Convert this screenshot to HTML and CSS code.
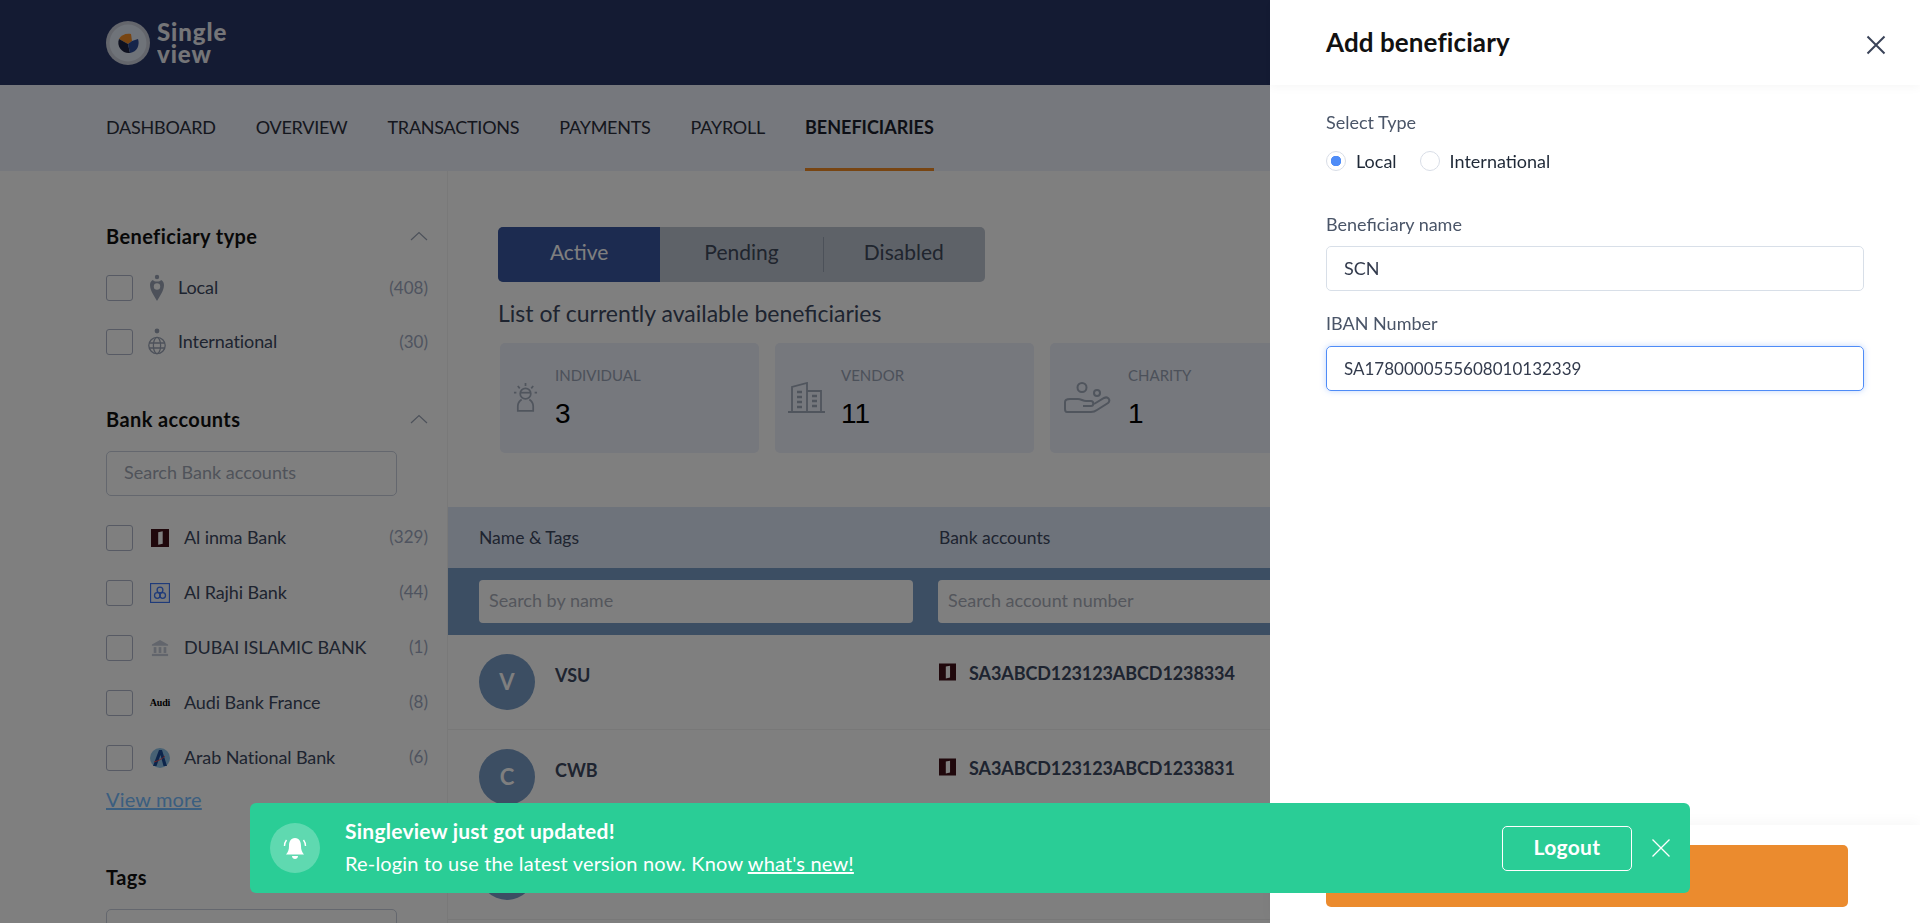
FILE: index.html
```html
<!DOCTYPE html>
<html lang="en">
	<head>
		<meta charset="UTF-8" />
		<meta name="viewport" content="width=device-width, initial-scale=1.0" />
		<title>Singleview - Beneficiaries</title>
		<link rel="stylesheet" href="styles.css">
	</head>
	<body>
		<header class="topbar">
			<div class="logo">
				<svg class="logo-mark" viewBox="0 0 44 44">
					<circle cx="22" cy="22" r="22" fill="#ffffff" opacity="0.75" />
					<circle cx="22" cy="22" r="18.5" fill="#dfe6f2" />
					<path d="M13 18 C15 14 20 12 25 13 L26 20 L22 23 Z" fill="#f08a24" />
					<path d="M13 18 L22 23 L24 32 C17 33 10 26 13 18 Z" fill="#1c2340" />
					<path d="M26 20 L32 18 C34 24 31 31 24 32 L22 23 Z" fill="#2c4a94" />
				</svg>
				<div class="logo-text">
					<div>Single</div>
					<div>view</div>
				</div>
			</div>
		</header>

		<nav class="mainnav">
			<a>DASHBOARD</a>
			<a>OVERVIEW</a>
			<a>TRANSACTIONS</a>
			<a>PAYMENTS</a>
			<a>PAYROLL</a>
			<a class="active">BENEFICIARIES</a>
		</nav>

		<div class="content">
			<aside class="sidebar">
				<div class="filter-title first">
					<span>Beneficiary type</span>
					<svg class="chevron" viewBox="0 0 18 10"><path d="M1 9 L9 1.5 L17 9" /></svg>
				</div>
				<div class="type-row">
					<span class="checkbox"></span>
					<svg class="type-icon" viewBox="0 0 18 28">
						<circle cx="9" cy="3" r="2.2" fill="#9aa3b5" />
						<path d="M2 11 C2 7 5 6 5 6 C6 8 12 8 13 6 C13 6 16 7 16 11 C16 17 11 23 9 27 C7 23 2 17 2 11 Z" fill="#9aa3b5" />
						<circle cx="9" cy="12.5" r="3.2" fill="#ffffff" />
					</svg>
					<span class="row-label">Local</span>
					<span class="row-count">(408)</span>
				</div>
				<div class="type-row">
					<span class="checkbox"></span>
					<svg class="type-icon" viewBox="0 0 18 28" fill="none" stroke="#9aa3b5" stroke-width="1.3">
						<circle cx="9" cy="3" r="2.4" fill="#9aa3b5" stroke="none" />
						<circle cx="9" cy="17.5" r="8.2" />
						<ellipse cx="9" cy="17.5" rx="3.6" ry="8.2" />
						<path d="M1 15 H17 M1 20 H17" />
					</svg>
					<span class="row-label">International</span>
					<span class="row-count">(30)</span>
				</div>

				<div class="filter-title">
					<span>Bank accounts</span>
					<svg class="chevron" viewBox="0 0 18 10"><path d="M1 9 L9 1.5 L17 9" /></svg>
				</div>
				<div class="filter-search">Search Bank accounts</div>
				<div class="bank-list">
					<div class="bank-row">
						<span class="checkbox"></span>
						<span class="bank-icon">
							<svg viewBox="0 0 20 20" width="18" height="18">
								<rect width="20" height="20" fill="#401018" />
								<path d="M8 3.5 L13 2.5 V16.5 L8 17.5 Z" fill="#ffffff" />
							</svg>
						</span>
						<span class="row-label">Al inma Bank</span>
						<span class="row-count">(329)</span>
					</div>
					<div class="bank-row">
						<span class="checkbox"></span>
						<span class="bank-icon">
							<svg viewBox="0 0 20 20" width="20" height="20" fill="none" stroke="#3e76f4" stroke-width="1.3">
								<rect x="0.5" y="0.5" width="19" height="19" fill="#f4f6fb" />
								<circle cx="10" cy="7" r="2.900" />
								<circle cx="7.300" cy="12.500" r="2.800" />
								<circle cx="12.700" cy="12.500" r="2.800" />
								<path d="M10 10 V15" />
							</svg>
						</span>
						<span class="row-label">Al Rajhi Bank</span>
						<span class="row-count">(44)</span>
					</div>
					<div class="bank-row">
						<span class="checkbox"></span>
						<span class="bank-icon">
							<svg viewBox="0 0 20 20" width="18" height="18" fill="#c4cbd8">
								<path d="M10 1 L19 6 V7.5 H1 V6 Z" />
								<rect x="3" y="9" width="3" height="6.5" />
								<rect x="8.5" y="9" width="3" height="6.5" />
								<rect x="14" y="9" width="3" height="6.5" />
								<rect x="1" y="16.5" width="18" height="2.5" />
							</svg>
						</span>
						<span class="row-label">DUBAI ISLAMIC BANK</span>
						<span class="row-count">(1)</span>
					</div>
					<div class="bank-row">
						<span class="checkbox"></span>
						<span class="bank-icon audi">Audi</span>
						<span class="row-label">Audi Bank France</span>
						<span class="row-count">(8)</span>
					</div>
					<div class="bank-row">
						<span class="checkbox"></span>
						<span class="bank-icon">
							<svg viewBox="0 0 20 20" width="20" height="20">
								<circle cx="10" cy="10" r="10" fill="#8fc3e8" />
								<path d="M3 18 L9 2 H12 L17 18 H13.500 L10.500 7 L6.500 18 Z" fill="#1a4a96" />
								<path d="M4 14 C8 13 12 11 15 8" fill="none" stroke="#f04848" stroke-width="0.9" />
							</svg>
						</span>
						<span class="row-label">Arab National Bank</span>
						<span class="row-count">(6)</span>
					</div>
				</div>
				<a class="view-more">View more</a>

				<div class="filter-title tags-title">
					<span>Tags</span>
				</div>
				<div class="filter-search"></div>
			</aside>

			<main class="main">
				<div class="tabs">
					<div class="tab active">Active</div>
					<div class="tab">Pending</div>
					<div class="tab divided">Disabled</div>
				</div>
				<div class="list-title">List of currently available beneficiaries</div>

				<div class="cards">
					<div class="card">
						<svg class="card-icon person" viewBox="0 0 26 30" fill="none" stroke="#a0aabb" stroke-width="1.8">
							<path d="M13 0 V3 M5 3 L7 5.500 M21 3 L19 5.500 M1 10 H3.500 M25 10 H22.500" />
							<circle cx="13" cy="11" r="5.500" />
							<path d="M8 10 H18" />
							<path d="M9 17 C6 19 5 21 5 24 V29 H21 V24 C21 21 20 19 17 17" />
						</svg>
						<div class="card-body">
							<div class="card-label">INDIVIDUAL</div>
							<div class="card-value">3</div>
						</div>
					</div>
					<div class="card">
						<svg class="card-icon building" viewBox="0 0 37 31" fill="none" stroke="#a0aabb" stroke-width="1.8">
							<path d="M0 30 H37" />
							<path d="M4 30 V5 L19 1 V30" />
							<path d="M19 9 H33 V30" />
							<path d="M9 10 H14 M9 15 H14 M9 20 H14 M9 25 H14 M24 14 H29 M24 19 H29 M24 24 H29" stroke-width="2.400" />
						</svg>
						<div class="card-body">
							<div class="card-label">VENDOR</div>
							<div class="card-value">11</div>
						</div>
					</div>
					<div class="card">
						<svg class="card-icon charity" viewBox="0 0 47 31" fill="none" stroke="#a0aabb" stroke-width="2">
							<circle cx="18" cy="5.500" r="4.500" />
							<circle cx="33" cy="11" r="3" />
							<path d="M14 17 C17 17 19 19 22 19 H27 C30 19 30 24 27 24 H19" />
							<path d="M30 22 L40 16 C44 14 47 18 44 21 L33 28 C31 29.500 29 30 27 30 H3 C1.500 30 1 29 1 27 V20 C1 18 3 17 6 17 H14" />
						</svg>
						<div class="card-body">
							<div class="card-label">CHARITY</div>
							<div class="card-value">1</div>
						</div>
					</div>
				</div>

				<div class="table">
					<div class="table-head">
						<div class="col-name">Name &amp; Tags</div>
						<div class="col-bank">Bank accounts</div>
					</div>
					<div class="table-search">
						<div class="col-name"><div class="cell-search">Search by name</div></div>
						<div class="col-bank"><div class="cell-search">Search account number</div></div>
					</div>
					<div class="table-row">
						<div class="col-name">
							<span class="avatar">V</span>
							<span class="row-name">VSU</span>
						</div>
						<div class="col-bank account">
							<svg viewBox="0 0 20 20" width="17" height="18">
								<rect width="20" height="20" fill="#401018" />
								<path d="M8 3.500 L13 2.500 V16.500 L8 17.500 Z" fill="#ffffff" />
							</svg>
							<span>SA3ABCD123123ABCD1238334</span>
						</div>
					</div>
					<div class="table-row">
						<div class="col-name">
							<span class="avatar">C</span>
							<span class="row-name">CWB</span>
						</div>
						<div class="col-bank account">
							<svg viewBox="0 0 20 20" width="17" height="18">
								<rect width="20" height="20" fill="#401018" />
								<path d="M8 3.500 L13 2.500 V16.500 L8 17.500 Z" fill="#ffffff" />
							</svg>
							<span>SA3ABCD123123ABCD1233831</span>
						</div>
					</div>
					<div class="table-row">
						<div class="col-name"><span class="avatar"></span></div>
					</div>
				</div>
			</main>
		</div>

		<div class="backdrop"></div>

		<section class="drawer">
			<div class="drawer-head">
				<h2>Add beneficiary</h2>
				<svg class="drawer-close" viewBox="0 0 20 20"><path d="M1.500 1.500 L18.500 18.500 M18.500 1.500 L1.500 18.500" /></svg>
			</div>
			<div class="drawer-body">
				<div class="field-label type-label">Select Type</div>
				<div class="radios">
					<span class="radio checked"></span>
					<span class="radio-label">Local</span>
					<span class="radio"></span>
					<span class="radio-label">International</span>
				</div>
				<div class="field-label name-label">Beneficiary name</div>
				<div class="field">SCN</div>
				<div class="field-label iban-label">IBAN Number</div>
				<div class="field focused">SA1780000555608010132339</div>
			</div>
			<div class="drawer-foot">
				<div class="submit"></div>
			</div>
		</section>

		<div class="toast">
			<span class="toast-bell">
				<svg viewBox="0 0 26 26" width="26" height="26">
					<path d="M13 3 C8.500 3 7 7 7 11 C7 15 6 17 4 19.500 H22 C20 17 19 15 19 11 C19 7 17.500 3 13 3 Z" fill="#ffffff" />
					<path d="M10 21 H16 C16 23 14.500 24 13 24 C11.500 24 10 23 10 21 Z" fill="#ffffff" />
					<path d="M4.500 5 C3 7 2.500 9 2.500 11 M21.500 5 C23 7 23.500 9 23.500 11" fill="none" stroke="#ffffff" stroke-width="1.400" />
				</svg>
			</span>
			<div class="toast-text">
				<div class="toast-title">Singleview just got updated!</div>
				<div class="toast-line">Re-login to use the latest version now. Know <a>what's new!</a></div>
			</div>
			<div class="toast-logout">Logout</div>
			<svg class="toast-close" viewBox="0 0 18 18"><path d="M0.500 0.500 L17.500 17.500 M17.500 0.500 L0.500 17.500" /></svg>
		</div>
	</body>
</html>
```

FILE: styles.css
```css
* {
	box-sizing: border-box;
}

body {
	font-family: 'Lato', 'Liberation Sans', sans-serif;
	background-color: #ffffff;
	color: #3c4860;
	margin: 0;
	height: 923px;
	overflow: hidden;
}

.topbar {
	height: 85px;
	background-color: #283666;
	padding-left: 106px;
	display: flex;
	align-items: center;
}

.logo {
	display: flex;
	align-items: center;
	gap: 7px;
}

.logo-mark {
	width: 44px;
	height: 44px;
}

.logo-text {
	color: #ffffff;
	font-size: 24px;
	line-height: 22px;
	font-weight: 900;
	letter-spacing: 0.9px;
	opacity: 0.9;
}

.mainnav {
	height: 86px;
	background-color: #ecf0fa;
	padding-left: 106px;
	display: flex;
	gap: 40px;
}

.mainnav a {
	font-size: 18px;
	color: #2a2f3c;
	padding-top: 31px;
	letter-spacing: -0.25px;
}

.mainnav a.active {
	font-weight: 700;
	color: #1a1f2c;
	letter-spacing: 0;
	border-bottom: 3px solid #f08a24;
}

.content {
	display: flex;
}

.sidebar {
	width: 448px;
	flex-shrink: 0;
	padding: 53px 19px 0 106px;
	border-right: 1px solid #f2f2f2;
	height: 752px;
}

.filter-title {
	display: flex;
	justify-content: space-between;
	align-items: center;
	height: 24px;
	margin-top: 38px;
	font-size: 20px;
	letter-spacing: 0.4px;
	font-weight: 700;
	color: #111111;
}

.filter-title.first {
	margin-top: 0;
	margin-bottom: 13px;
}

.tags-title {
	margin-top: 54px;
}

.chevron {
	width: 18px;
	height: 10px;
	fill: none;
	stroke: #9aa3b5;
	stroke-width: 1.2;
}

.type-row,
.bank-row {
	display: flex;
	align-items: center;
	height: 54px;
}

.row-label,
.row-count {
	margin-bottom: 2px;
}

.bank-row {
	height: 55px;
}

.bank-list {
	margin-top: 14px;
}

.checkbox {
	width: 27px;
	height: 26px;
	border: 1px solid #aeb4c8;
	border-radius: 3px;
	background-color: #ffffff;
	flex-shrink: 0;
}

.type-icon {
	width: 18px;
	height: 28px;
	margin: 0 12px 0 15px;
	flex-shrink: 0;
}

.bank-icon {
	width: 20px;
	margin: 0 14px 0 17px;
	display: flex;
	justify-content: center;
	flex-shrink: 0;
}

.bank-icon.audi {
	font-family: 'Liberation Serif', serif;
	font-size: 10px;
	font-weight: 700;
	color: #000000;
	letter-spacing: -0.2px;
}

.row-label {
	font-size: 18px;
	letter-spacing: -0.1px;
	color: #3c4860;
	flex: 1;
	white-space: nowrap;
}

.row-count {
	font-size: 17px;
	color: #9ea8c0;
}

.filter-search {
	width: 291px;
	height: 45px;
	margin-top: 20px;
	padding: 0 17px;
	border: 1px solid #c8cedc;
	border-radius: 5px;
	background-color: #ffffff;
	font-size: 18px;
	line-height: 41px;
	color: #a0a7b5;
}

.view-more {
	display: block;
	margin-top: 2px;
	line-height: 24px;
	font-size: 20px;
	letter-spacing: 0.15px;
	color: #76bcff;
	text-decoration: underline;
}

.main {
	flex: 1;
	padding-top: 56px;
	min-width: 0;
}

.tabs {
	margin-left: 50px;
	width: 487px;
	height: 55px;
	display: flex;
	background-color: #bcc4d0;
	border-radius: 5px;
	overflow: hidden;
}

.tab {
	flex: 1;
	text-align: center;
	font-size: 21px;
	line-height: 50px;
	color: #404a5c;
}

.tab.active {
	background-color: #3856a0;
	color: #ffffff;
}

.tab.divided {
	position: relative;
}

.tab.divided::before {
	content: '';
	position: absolute;
	left: 0;
	top: 10px;
	bottom: 10px;
	border-left: 1px solid #98a2b2;
}

.list-title {
	margin: 18px 0 0 50px;
	font-size: 23px;
	line-height: 26px;
	color: #3c4860;
}

.cards {
	display: flex;
	gap: 16px;
	margin: 17px 0 0 52px;
}

.card {
	width: 259px;
	height: 110px;
	flex-shrink: 0;
	display: flex;
	background-color: #ecf0fa;
	border-radius: 5px;
	padding: 23px 0 0 13px;
}

.card-icon {
	height: 31px;
	margin-top: 16px;
	flex-shrink: 0;
}

.card-icon.person {
	width: 25px;
	margin-right: 17px;
}

.card-icon.building {
	width: 37px;
	margin-right: 16px;
}

.card-icon.charity {
	width: 47px;
	margin: 16px 17px 0 1px;
}

.card-label {
	font-size: 15px;
	line-height: 18px;
	color: #98a2b4;
}

.card-value {
	margin-top: 15px;
	font-family: 'Liberation Sans', sans-serif;
	font-size: 28px;
	line-height: 30px;
	color: #000000;
}

.table {
	margin-top: 54px;
}

.table-head,
.table-search,
.table-row {
	display: flex;
}

.col-name {
	width: 491px;
	padding-left: 31px;
	flex-shrink: 0;
}

.col-bank {
	flex: 1;
}

.table-head {
	height: 61px;
	background-color: #dce6f6;
	align-items: center;
	font-size: 17.5px;
	color: #3c4860;
}

.table-search {
	height: 67px;
	background-color: #789cc6;
	align-items: center;
}

.table-search .col-name {
	width: 490px;
	padding-right: 25px;
}

.cell-search {
	height: 43px;
	padding: 0 10px;
	background-color: #ffffff;
	border-radius: 4px;
	font-size: 18px;
	line-height: 41px;
	color: #a8adb8;
}

.table-row {
	height: 95px;
	border-bottom: 1px solid #f0f0f0;
}

.table-row .col-name {
	display: flex;
	padding-top: 19px;
	align-items: flex-start;
}

.avatar {
	width: 56px;
	height: 56px;
	border-radius: 50%;
	background-color: #789cc6;
	color: #ffffff;
	font-size: 22px;
	font-weight: 700;
	text-align: center;
	line-height: 56px;
	flex-shrink: 0;
}

.row-name {
	margin: 9px 0 0 20px;
	font-size: 18px;
	line-height: 24px;
	font-weight: 700;
	color: #3c4860;
}

.account {
	display: flex;
	align-items: flex-start;
	padding-top: 28px;
	gap: 13px;
	font-size: 18px;
	letter-spacing: -0.1px;
	line-height: 20px;
	font-weight: 700;
	color: #3c4860;
}

.backdrop {
	position: fixed;
	inset: 0;
	background-color: rgba(0, 0, 0, 0.5);
}

.drawer {
	position: fixed;
	top: 0;
	right: 0;
	width: 650px;
	height: 923px;
	background-color: #ffffff;
	display: flex;
	flex-direction: column;
}

.drawer-head {
	height: 85px;
	flex-shrink: 0;
	padding: 0 34px 0 56px;
	display: flex;
	justify-content: space-between;
	align-items: center;
	box-shadow: 0 2px 10px rgba(0, 0, 0, 0.04);
}

.drawer-head h2 {
	margin: 0 0 2px;
	font-size: 26px;
	letter-spacing: 0.1px;
	font-weight: 700;
	color: #111111;
}

.drawer-close {
	width: 20px;
	height: 20px;
	margin-top: 5px;
	fill: none;
	stroke: #3a4358;
	stroke-width: 2;
}

.drawer-body {
	flex: 1;
	padding: 0 56px;
}

.field-label {
	font-size: 18px;
	line-height: 22px;
	color: #4a5568;
}

.type-label {
	margin-top: 26px;
}

.name-label {
	margin-top: 40px;
}

.iban-label {
	margin-top: 21px;
}

.radios {
	display: flex;
	align-items: center;
	height: 24px;
	margin-top: 16px;
}

.radio {
	width: 20px;
	height: 20px;
	border: 1px solid #d8dde6;
	border-radius: 50%;
	flex-shrink: 0;
}

.radio.checked {
	background: radial-gradient(circle, #4f8cf7 0, #4f8cf7 5px, #ffffff 5.5px);
}

.radio-label {
	margin: 0 23px 0 10px;
	font-size: 18px;
	color: #1f2937;
}

.field {
	width: 538px;
	height: 45px;
	margin-top: 11px;
	padding: 0 17px;
	border: 1px solid #d8dfe8;
	border-radius: 5px;
	font-size: 18px;
	line-height: 43px;
	color: #333b4d;
}

.field.focused {
	margin-top: 12px;
	font-size: 17px;
	border-color: #4f8cf7;
	box-shadow: 0 0 6px rgba(79, 140, 247, 0.35);
}

.drawer-foot {
	height: 98px;
	flex-shrink: 0;
	padding: 20px 72px 0 56px;
	box-shadow: 0 -4px 12px rgba(0, 0, 0, 0.03);
}

.submit {
	height: 62px;
	background-color: #eb8b2e;
	border-radius: 5px;
}

.toast {
	position: fixed;
	left: 250px;
	top: 803px;
	width: 1440px;
	height: 90px;
	padding: 0 20px;
	display: flex;
	align-items: center;
	background-color: #2acd96;
	border-radius: 6px;
	color: #ffffff;
}

.toast-bell {
	width: 50px;
	height: 50px;
	flex-shrink: 0;
	display: flex;
	justify-content: center;
	align-items: center;
	background-color: rgba(255, 255, 255, 0.25);
	border-radius: 50%;
}

.toast-text {
	flex: 1;
	margin-left: 25px;
}

.toast-title {
	font-size: 21px;
	letter-spacing: 0.25px;
	font-weight: 700;
	line-height: 24px;
	margin-top: -2px;
}

.toast-line {
	margin-top: 8px;
	font-size: 20px;
	letter-spacing: 0.17px;
	line-height: 24px;
}

.toast-line a {
	text-decoration: underline;
}

.toast-logout {
	width: 130px;
	height: 45px;
	border: 1px solid #ffffff;
	border-radius: 5px;
	text-align: center;
	font-size: 21px;
	letter-spacing: 0.3px;
	font-weight: 700;
	line-height: 39px;
}

.toast-close {
	width: 18px;
	height: 18px;
	margin-left: 20px;
	fill: none;
	stroke: #ffffff;
	stroke-width: 1.3;
}
```
